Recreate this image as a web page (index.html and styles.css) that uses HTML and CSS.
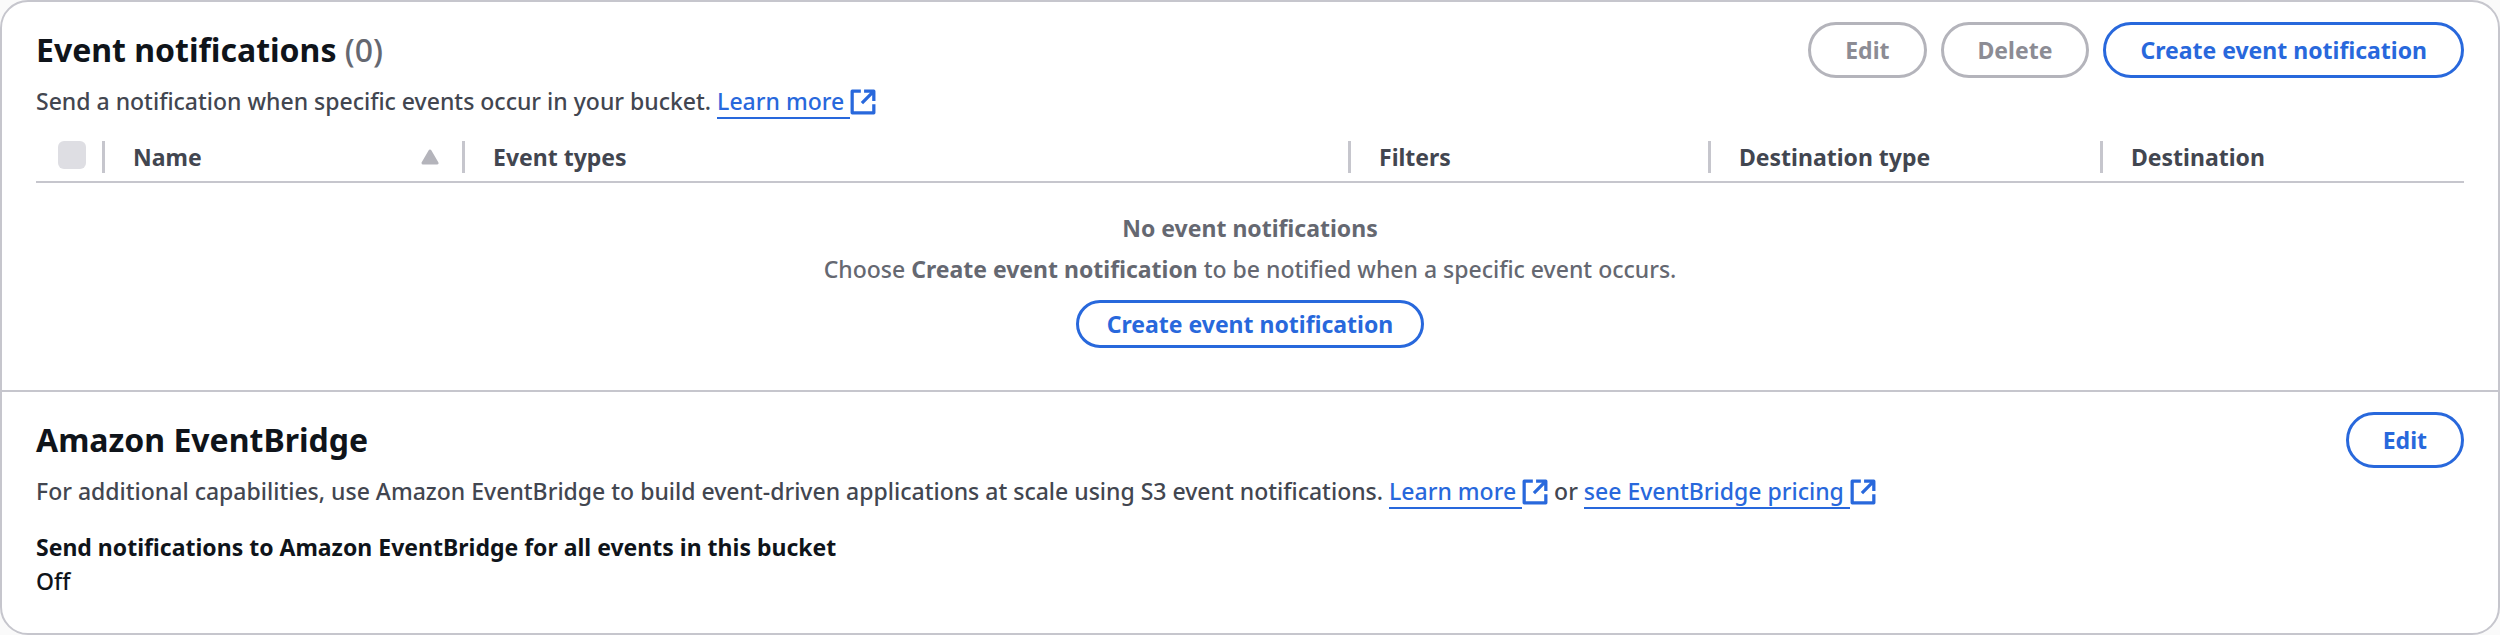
FILE: index.html
```html
<!DOCTYPE html>
<html lang="en">
<head>
    <meta charset="UTF-8">
    <meta name="viewport" content="width=device-width, initial-scale=1.0">
    <title>Event notifications</title>
    <link rel="stylesheet" href="styles.css">
</head>
<body>
    <main class="card">
        <!-- Event notifications -->
        <section class="section notifications">
            <div class="section-header">
                <h2>Event notifications <span class="counter">(0)</span></h2>
                <div class="actions">
                    <button class="btn" disabled>Edit</button>
                    <button class="btn" disabled>Delete</button>
                    <button class="btn">Create event notification</button>
                </div>
            </div>
            <p class="description">Send a notification when specific events occur in your bucket.
                <a href="#" class="link"><span class="link-text">Learn more&nbsp;</span><svg class="icon" viewBox="0 0 24 24"><path d="M10 2H2v20h20v-8M13 2h9v9M22 2L11 13"/></svg></a></p>

            <table class="table">
                <colgroup>
                    <col class="col-select">
                    <col class="col-name">
                    <col>
                    <col class="col-filters">
                    <col class="col-type">
                    <col class="col-destination">
                </colgroup>
                <thead>
                    <tr>
                        <th><div class="th-inner th-select"><input type="checkbox" class="checkbox" aria-label="Select all" disabled></div></th>
                        <th><div class="th-inner">Name <svg class="sort" viewBox="0 0 20 16"><path d="M10 2l7 12H3z"/></svg></div></th>
                        <th><div class="th-inner">Event types</div></th>
                        <th><div class="th-inner">Filters</div></th>
                        <th><div class="th-inner">Destination type</div></th>
                        <th><div class="th-inner">Destination</div></th>
                    </tr>
                </thead>
                <tbody>
                    <tr>
                        <td colspan="6">
                            <div class="empty">
                                <strong>No event notifications</strong>
                                <p>Choose <strong>Create event notification</strong> to be notified when a specific event occurs.</p>
                                <button class="btn btn-small">Create event notification</button>
                            </div>
                        </td>
                    </tr>
                </tbody>
            </table>
        </section>

        <!-- EventBridge -->
        <section class="section">
            <div class="section-header">
                <h2>Amazon EventBridge</h2>
                <div class="actions">
                    <button class="btn">Edit</button>
                </div>
            </div>
            <p class="description">For additional capabilities, use Amazon EventBridge to build event-driven applications at scale using S3 event notifications.
                <a href="#" class="link"><span class="link-text">Learn more&nbsp;</span><svg class="icon" viewBox="0 0 24 24"><path d="M10 2H2v20h20v-8M13 2h9v9M22 2L11 13"/></svg></a>
                or
                <a href="#" class="link"><span class="link-text">see EventBridge pricing&nbsp;</span><svg class="icon" viewBox="0 0 24 24"><path d="M10 2H2v20h20v-8M13 2h9v9M22 2L11 13"/></svg></a></p>
            <dl class="setting">
                <dt>Send notifications to Amazon EventBridge for all events in this bucket</dt>
                <dd>Off</dd>
            </dl>
        </section>
    </main>
</body>
</html>
```

FILE: styles.css
```css
:root {
    --blue: #2868dc;
    --heading: #0f141a;
    --text: #424650;
    --muted: #656871;
    --line: #c6c6cd;
    --disabled: #b4b4bb;
}

* {
    box-sizing: border-box;
}

body {
    margin: 0;
    background-color: #fafafa;
    color: var(--text);
    font-family: "Noto Sans", "Open Sans", sans-serif;
    font-size: 23px;
    font-weight: 500;
    line-height: 34px;
}

.card {
    background-color: #fff;
    border: 2px solid var(--line);
    border-radius: 28px;
}

.section {
    padding: 20px 34px 35px;
}

.notifications {
    padding-bottom: 42px;
    border-bottom: 2px solid var(--line);
}

.section-header {
    display: flex;
    justify-content: space-between;
    align-items: center;
}

h2 {
    margin: 0;
    color: var(--heading);
    font-size: 32px;
    font-weight: 700;
    line-height: 40px;
}

.counter {
    color: var(--muted);
    font-weight: 500;
}

.actions {
    display: flex;
    gap: 14px;
}

.btn {
    height: 56px;
    padding: 0 34px;
    background-color: #fff;
    border: 3px solid var(--blue);
    border-radius: 28px;
    color: var(--blue);
    font-family: inherit;
    font-size: 23px;
    font-weight: 700;
    cursor: pointer;
}

.btn:disabled {
    border-color: var(--disabled);
    color: #8c8c94;
    cursor: default;
}

.btn-small {
    height: 48px;
    padding: 0 28px;
}

.description {
    margin: 6px 0 0;
}

.link {
    color: var(--blue);
    text-decoration: none;
    white-space: nowrap;
}

.link-text {
    border-bottom: 2px solid var(--blue);
}

.icon {
    width: 26px;
    height: 26px;
    vertical-align: -5px;
    fill: none;
    stroke: currentColor;
    stroke-width: 3;
    stroke-linejoin: round;
}

/* Table */
.table {
    width: 100%;
    margin-top: 23px;
    border-collapse: collapse;
    table-layout: fixed;
}

.col-select {
    width: 69px;
}

.col-name,
.col-filters {
    width: 360px;
}

.col-type {
    width: 392px;
}

.col-destination {
    width: 361px;
}

th {
    padding: 0 0 8px;
    border-bottom: 2px solid var(--line);
    text-align: left;
}

.th-inner {
    display: flex;
    justify-content: space-between;
    align-items: center;
    height: 32px;
    padding: 0 22px 0 28px;
    border-right: 3px solid var(--line);
}

th:last-child .th-inner {
    border-right: none;
}

.th-select {
    align-items: flex-start;
    padding: 0 0 0 22px;
}

.checkbox {
    appearance: none;
    width: 28px;
    height: 28px;
    margin: 0;
    background-color: #dedee3;
    border-radius: 6px;
}

.sort {
    width: 20px;
    height: 16px;
    fill: var(--disabled);
    stroke: var(--disabled);
    stroke-width: 3;
    stroke-linejoin: round;
}

td {
    padding: 0;
}

strong {
    font-weight: 700;
}

.empty {
    display: flex;
    flex-direction: column;
    align-items: center;
    padding-top: 28px;
    color: var(--muted);
    text-align: center;
}

.empty p {
    margin: 7px 0 14px;
}

.setting {
    margin: 22px 0 0;
    color: var(--heading);
}

.setting dt {
    font-weight: 700;
}

.setting dd {
    margin: 0;
}
```
